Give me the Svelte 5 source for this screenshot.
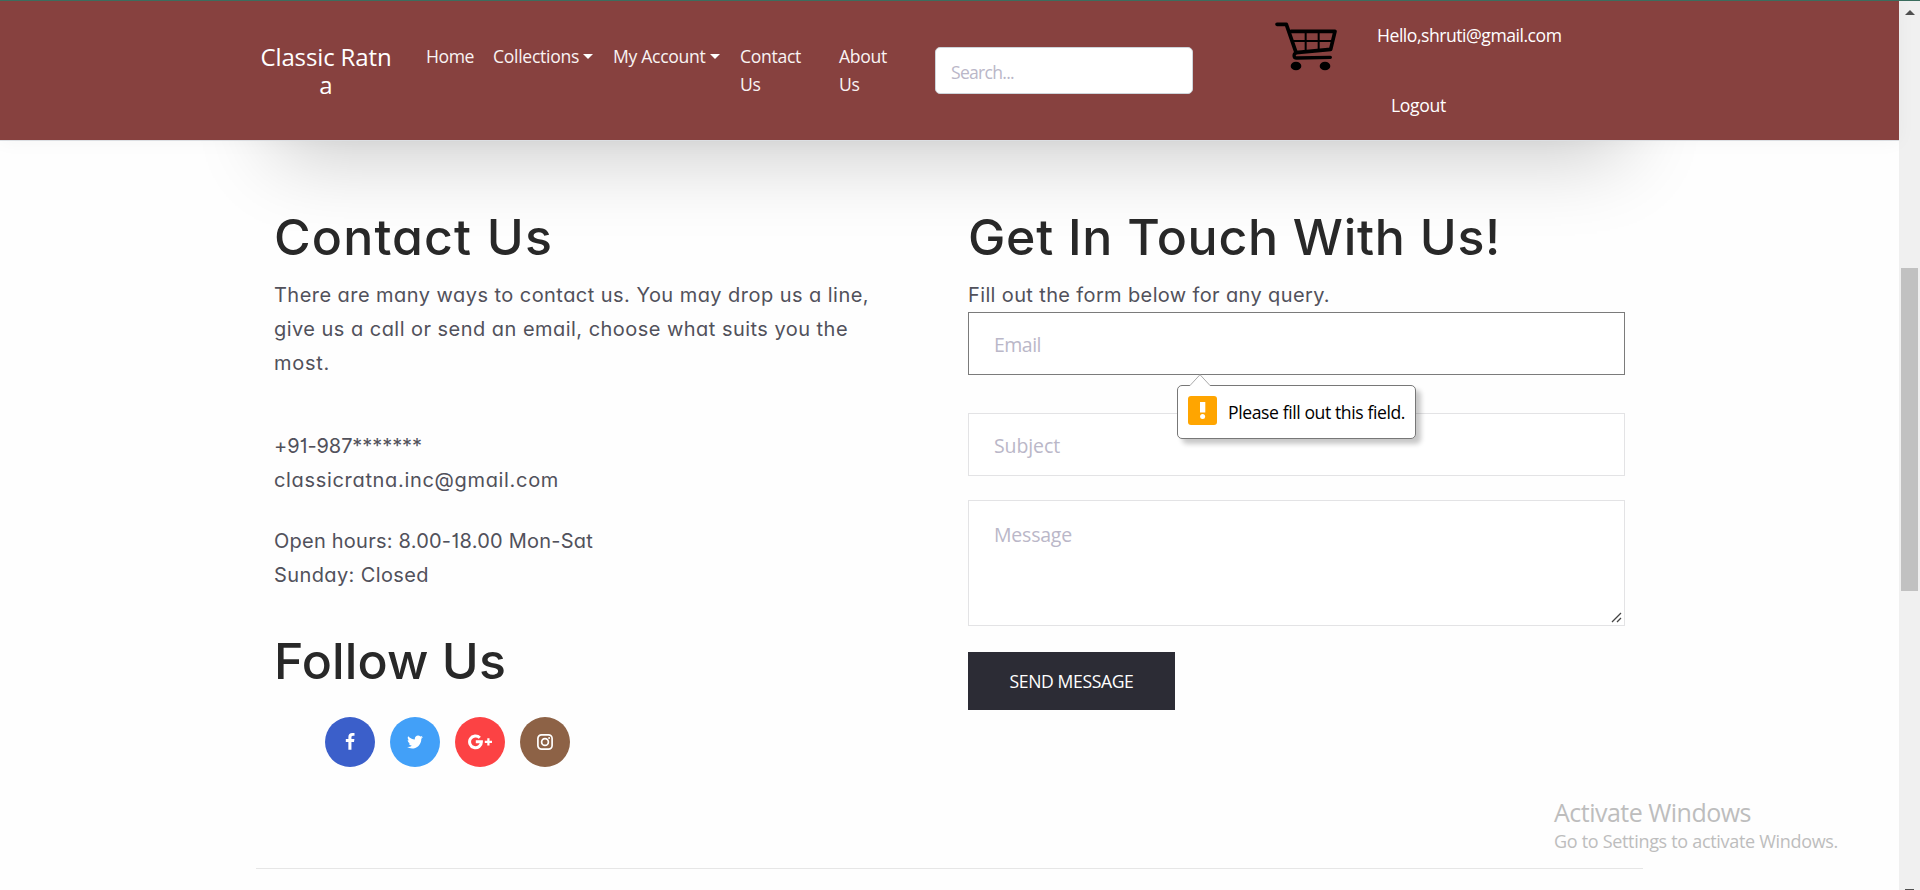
<script>
  // Spreads the letters of a line so that it takes up the given width.
  function fit(node, width) {
    const natural = node.getBoundingClientRect().width;
    node.style.letterSpacing = `${(width - natural) / node.textContent.length}px`;
  }

  const about = [
    ['There are many ways to contact us. You may drop us a line,', 595],
    ['give us a call or send an email, choose what suits you the', 574],
    ['most.', 56]
  ];
  const reach = [['+91-987*******', 148], ['classicratna.inc@gmail.com', 285]];
  const hours = [['Open hours: 8.00-18.00 Mon-Sat', 319], ['Sunday: Closed', 155]];
</script>

{#snippet lines(list)}
  {#each list as [text, width]}
    <div class="line"><span use:fit={width}>{text}</span></div>
  {/each}
{/snippet}

<div class="screen">
  <div class="page">
    <nav>
      <div class="brand"><span use:fit={131}>Classic Ratn</span><br />a</div>
      <a class="home" href="#home"><span use:fit={48}>Home</span></a>
      <a class="collections" href="#collections"><span use:fit={86}>Collections</span><i class="caret"></i></a>
      <a class="account" href="#account"><span use:fit={92.5}>My Account</span><i class="caret"></i></a>
      <a class="contact" href="#contact"><span use:fit={61}>Contact</span><br /><span use:fit={20.5}>Us</span></a>
      <a class="about" href="#about"><span use:fit={48}>About</span><br /><span use:fit={20.5}>Us</span></a>
      <div class="search"><span use:fit={63}>Search...</span></div>
      <svg class="cart" viewBox="0 0 270 210" width="90" height="70">
        <g fill="none" stroke="#000" stroke-linejoin="round" stroke-linecap="round">
          <path stroke-width="11" d="M51 43H79L108 127" />
          <path stroke-width="11" d="M93 64H225L212 118L108 128" />
          <path stroke-width="6" d="M137 66V122M176 66V119M101 93H216" />
          <path stroke-width="10" d="M108 128C99 134 101 145 111 144L211 142" />
        </g>
        <ellipse cx="108" cy="168" rx="16" ry="13" />
        <ellipse cx="195" cy="168" rx="16" ry="13" />
      </svg>
      <div class="user">
        <span use:fit={184.5}>Hello,shruti@gmail.com</span>
        <a href="#logout"><span use:fit={55}>Logout</span></a>
      </div>
    </nav>

    <main>
      <section class="left">
        <h2><span use:fit={279}>Contact Us</span></h2>
        <div class="text first">{@render lines(about)}</div>
        <div class="text second">{@render lines(reach)}</div>
        <div class="text third">{@render lines(hours)}</div>
        <h2 class="follow"><span use:fit={232}>Follow Us</span></h2>
        <div class="social">
          <a class="fb" href="#facebook" aria-label="Facebook">
            <svg viewBox="0 0 1792 1792" width="18" height="18"><path d="M1343 12v264h-157q-86 0-116 36t-30 108v189h293l-39 296h-254v759h-306v-759h-255v-296h255v-218q0-186 104-288.5t277-102.5q147 0 228 12z" /></svg>
          </a>
          <a class="tw" href="#twitter" aria-label="Twitter">
            <svg viewBox="0 0 1792 1792" width="18" height="18"><path d="M1684 408q-67 98-162 167 1 14 1 42 0 130-38 259.5t-115.5 248.5-184.5 210.5-258 146-323 54.5q-271 0-496-145 35 4 78 4 225 0 401-138-105-2-188-64.5t-114-159.5q33 5 61 5 43 0 85-11-112-23-185.5-111.5t-73.5-205.5v-4q68 38 146 41-66-44-105-115t-39-154q0-88 44-163 121 149 294.5 238.5t371.5 99.5q-8-38-8-74 0-134 94.5-228.5t228.5-94.5q140 0 236 102 109-21 205-78-37 115-142 178 93-10 186-50z" /></svg>
          </a>
          <a class="gp" href="#google" aria-label="Google Plus">
            <svg viewBox="0 0 24 16" width="24" height="16"><path fill="none" stroke="#fff" stroke-width="3" d="M11.8 3.8A5.9 5.9 0 1 0 13.4 7.7H7.8" /><path fill="none" stroke="#fff" stroke-width="2.2" d="M16.8 7.8H24M20.4 4.2V11.4" /></svg>
          </a>
          <a class="ig" href="#instagram" aria-label="Instagram">
            <svg viewBox="0 0 16 16" width="16" height="16"><rect x=".9" y=".9" width="14.2" height="14.2" rx="3.6" fill="none" stroke="#fff" stroke-width="1.7" /><circle cx="8" cy="8" r="3.4" fill="none" stroke="#fff" stroke-width="1.7" /><circle cx="12.1" cy="3.9" r="1" /></svg>
          </a>
        </div>
      </section>

      <section class="right">
        <h2><span use:fit={533}>Get In Touch With Us!</span></h2>
        <div class="text first"><div class="line"><span use:fit={362}>Fill out the form below for any query.</span></div></div>
        <div class="field email">
          <span use:fit={47}>Email</span>
          <div class="bubble">
            <svg class="tip" viewBox="0 0 22 12" width="22" height="12"><path d="M1 11.5L11 .7L21 11.5V12H1Z" fill="#fff" /><path d="M1 11.5L11 .7L21 11.5" fill="none" stroke="#aaa" /></svg>
            <b><svg viewBox="0 0 29 29" width="29" height="29"><path fill="#fff" d="M12 6H17.3V16.5H12Z" /><circle cx="14.6" cy="20.5" r="2.5" fill="#fff" /></svg></b>
            <span use:fit={177}>Please fill out this field.</span>
          </div>
        </div>
        <div class="field subject"><span use:fit={66}>Subject</span></div>
        <div class="field message">
          <span use:fit={78}>Message</span>
          <svg class="grip" viewBox="0 0 11 11" width="11" height="11"><path d="M1 10L10 1M6 10L10 6" stroke="#444" stroke-width="1.3" /></svg>
        </div>
        <button><span use:fit={124}>SEND MESSAGE</span></button>
      </section>
    </main>
    <hr />
  </div>

  <div class="scrollbar">
    <svg viewBox="0 0 10 5" width="10" height="5"><path d="M5 0L10 5H0Z" fill="#505050" /></svg>
    <div class="thumb"></div>
    <div class="down"></div>
  </div>

  <div class="watermark">
    <div class="big"><span use:fit={197}>Activate Windows</span></div>
    <div class="small"><span use:fit={284}>Go to Settings to activate Windows.</span></div>
  </div>
</div>

<style>
  :global(body) { margin: 0; background: #fff; overflow: hidden; }
  .screen {
    position: relative; display: flex; box-sizing: border-box; height: 890px; width: 1920px;
    border-top: 1px solid #3b6d5e; overflow: hidden; background: #fefefe;
    font-family: "Open Sans", "Noto Sans", sans-serif;
  }
  span { display: inline-block; white-space: nowrap; }
  a { color: inherit; text-decoration: none; }
  .page { width: 1899px; }

  nav {
    position: relative; z-index: 1; display: flex; align-items: flex-start; box-sizing: border-box;
    height: 139px; padding-left: 260px; background: #87413f; color: #fff;
    font-size: 17.6px; line-height: 28px; box-shadow: 0 1px 0 #dcdfe3, 0 2px 18px rgba(0, 0, 0, .04);
  }
  nav > a { display: block; margin-top: 41px; white-space: nowrap; color: #f9f3f3; }
  .brand { width: 132px; margin-top: 42px; font-size: 24px; text-align: center; }
  .home { margin-left: 34px; width: 67px; }
  .collections { width: 120px; }
  .account { width: 127px; }
  .contact { width: 99px; }
  .about { width: 96px; }
  .caret { display: inline-block; margin-left: 4px; vertical-align: 4px; border: 5px solid transparent; border-top-color: #fff; border-bottom: 0; }
  .search {
    box-sizing: border-box; width: 258px; height: 47px; margin-top: 46px; padding-left: 15px;
    border: 1px solid #ced4da; border-radius: 5px; background: #fff; color: #bab7c8; line-height: 49px;
  }
  .cart { margin: 9px 0 0 67px; }
  .user { display: flex; flex-direction: column; align-items: flex-start; margin: 20px 0 0 27px; }
  .user a { margin: 42px 0 0 14px; }

  main {
    display: grid; grid-template-columns: 694px 657px; height: 727px; padding: 67px 18px 0; margin: 0 256px;
    box-sizing: border-box; width: 1387px; position: relative;
  }
  main::before {
    content: ""; position: absolute; left: 0; right: 0; bottom: 100%; height: 300px;
    box-shadow: 0 36px 76px -19px rgba(0, 0, 0, .2);
  }
  section { position: relative; font-family: Inter, "Open Sans", sans-serif; font-feature-settings: "cv11", "cv01"; }
  h2 { margin: 0; font-size: 50px; line-height: 61px; height: 60px; font-weight: 500; color: #282828; }
  .text { color: #51515b; font-size: 20px; line-height: 34px; }
  .line { height: 34px; }
  .first { margin-top: 11px; }
  .second { margin-top: 49px; }
  .third { margin-top: 27px; }
  .follow { margin-top: 39px; }
  .social { display: flex; gap: 15px; margin: 26px 0 0 51px; }
  .social a { display: flex; align-items: center; justify-content: center; width: 50px; height: 50px; border-radius: 50%; fill: #fff; }
  .fb { background: #3b5fca; }
  .tw { background: #42a0f8; }
  .gp { background: #fc4244; }
  .ig { background: #8d6246; }

  .field {
    position: relative; box-sizing: border-box; height: 63px; padding-left: 25px; border: 1px solid #e3e3e5;
    background: #fff; color: #bab7c8; font: 19.5px/64px "Open Sans", "Noto Sans", sans-serif;
  }
  .email { border-color: #7b7b7b; z-index: 1; }
  .subject { margin-top: 38px; }
  .message { height: 126px; margin-top: 24px; line-height: 68px; }
  .grip { position: absolute; right: 2px; bottom: 2px; }
  .bubble {
    position: absolute; left: 208px; top: 72px; display: flex; align-items: center; box-sizing: border-box;
    width: 239px; height: 54px; padding-left: 10px; gap: 11px; border: 1px solid #777; border-radius: 5px;
    background: #fff; color: #000; font-size: 17.6px; line-height: 28px; box-shadow: 5px 5px 5px rgba(0, 0, 0, .22);
  }
  .tip { position: absolute; left: 11px; top: -12px; }
  .bubble b { width: 29px; height: 29px; border-radius: 3px; background: #ffa500; margin-top: -4px; }
  .bubble b svg { display: block; }
  button {
    display: block; width: 207px; height: 58px; margin-top: 26px; padding: 0; border: 0; background: #2c2c35; color: #fff;
    font: 17.6px/58px "Open Sans", "Noto Sans", sans-serif;
  }
  hr { width: 1387px; height: 1px; margin: 1px 0 0 256px; border: 0; background: #e6e6e6; }

  .scrollbar { width: 21px; background: #f0f0f0; display: flex; flex-direction: column; align-items: center; }
  .scrollbar svg { margin-top: 9px; }
  .thumb { width: 17px; height: 323px; margin-top: 253px; background: #c1c1c1; }
  .down { width: 9px; height: 1px; margin-top: auto; background: #505050; }

  .watermark { position: absolute; left: 1554px; top: 795px; color: #bdbdbd; }
  .big { font-size: 25px; line-height: 32px; }
  .small { font-size: 18px; line-height: 26px; }
</style>
